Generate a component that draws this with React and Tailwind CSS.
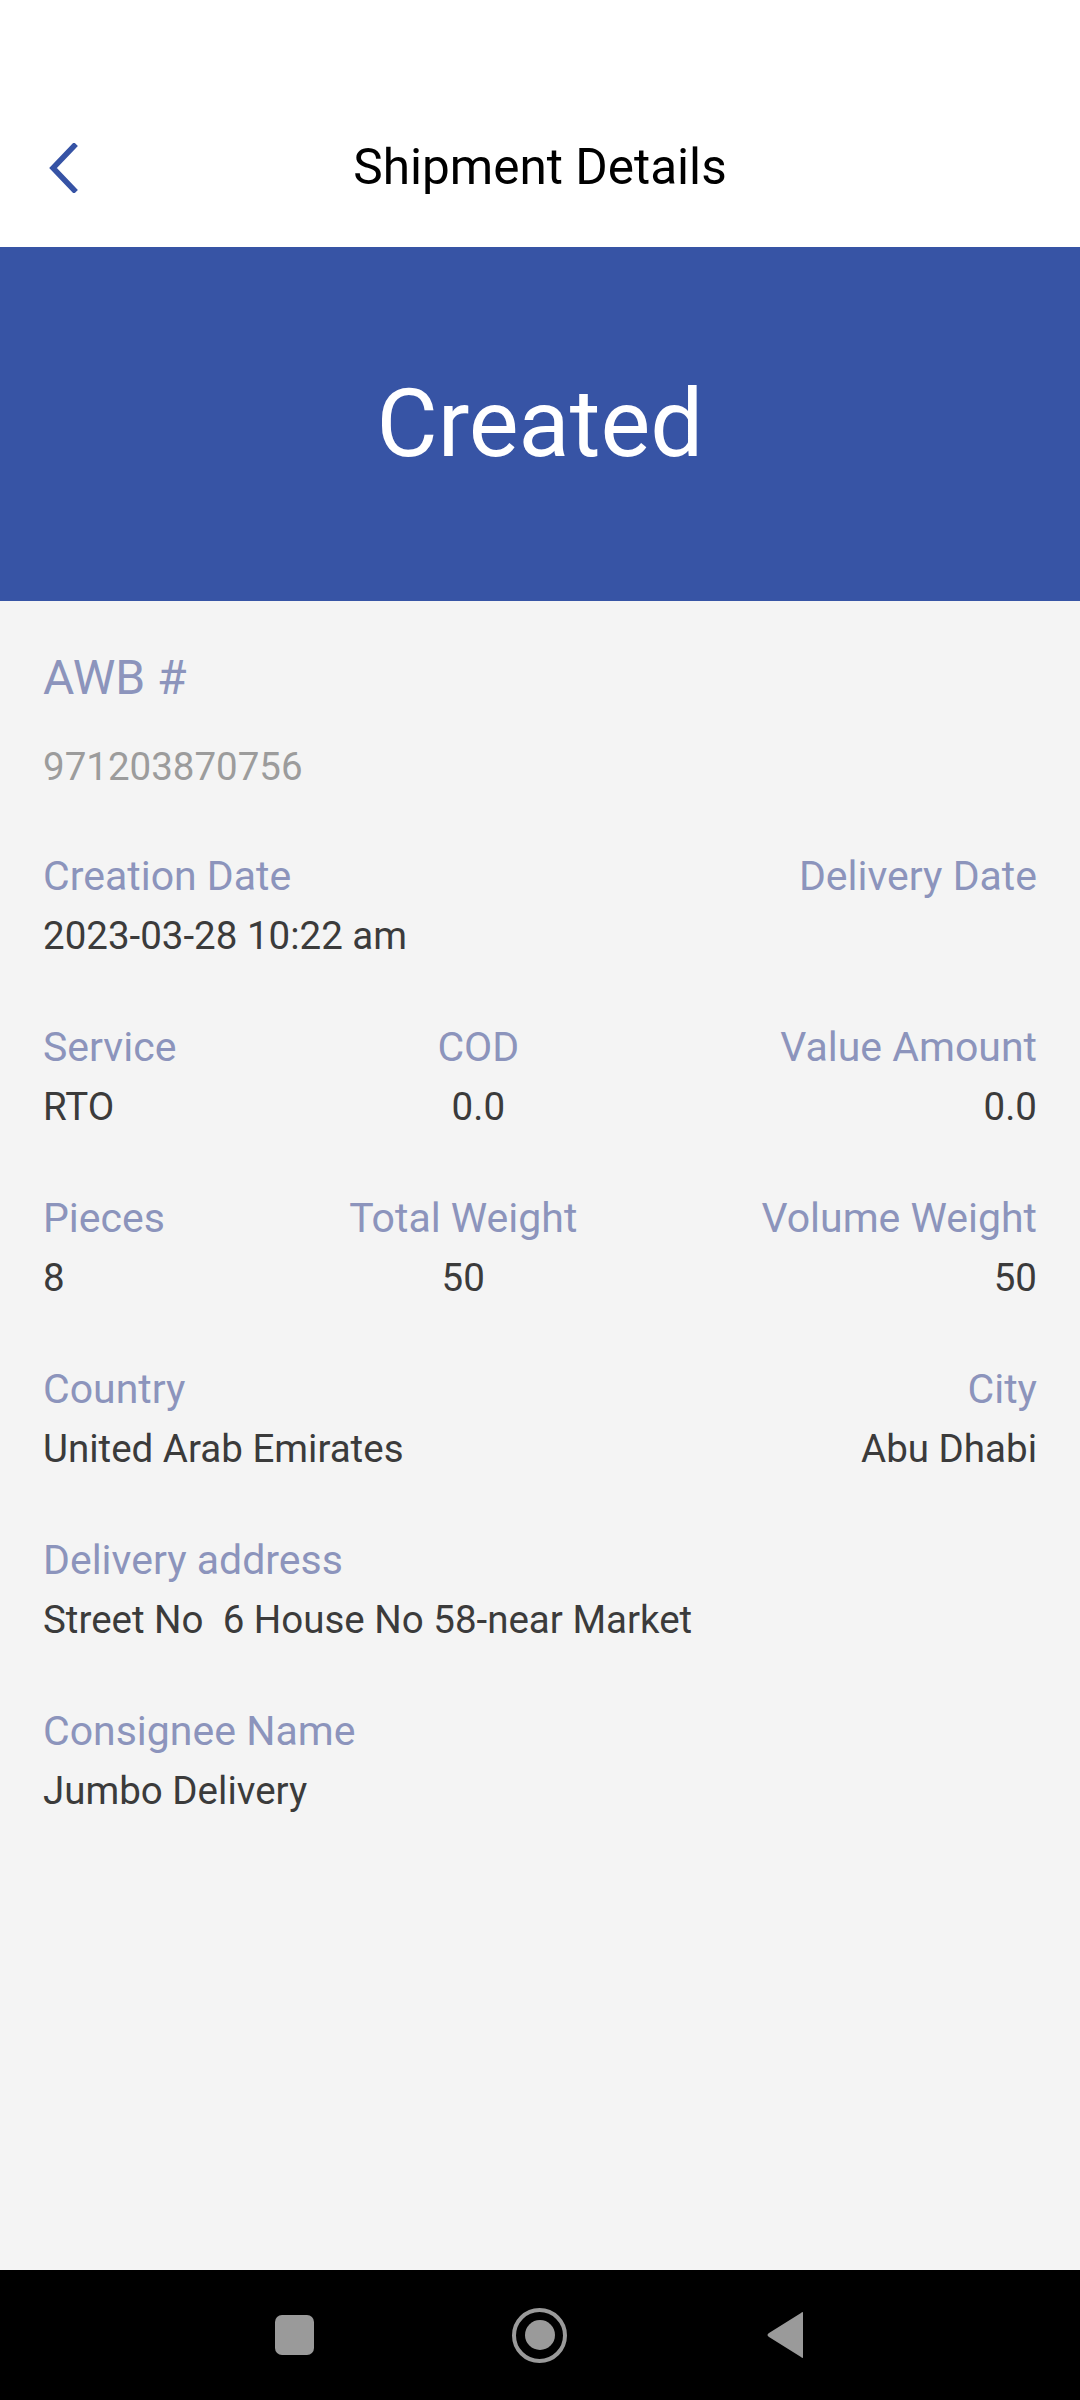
import { useState } from "react";

const label = "text-[41px] leading-[44px] text-[#8c94bc]";
const value = "mt-[16px] text-[38.5px] leading-[44px] text-[#3b3b3b]";

function Field({ title, text, align = "start" }) {
  const alignCls =
    align === "end" ? "items-end text-right" : align === "center" ? "items-center text-center" : "items-start";
  return (
    <div className={`flex flex-col ${alignCls}`}>
      <p className={label}>{title}</p>
      <p className={value}>{text}</p>
    </div>
  );
}

function Row({ children }) {
  return <div className="mb-[67px] flex items-start justify-between">{children}</div>;
}

function NavBar() {
  return (
    <div className="flex h-[130px] items-center justify-center bg-black">
      <div className="flex w-[531px] items-center justify-between">
        <div className="h-[40px] w-[39px] rounded-[7px] bg-[#9a9a9a]" />
        <div className="flex h-[55px] w-[55px] items-center justify-center rounded-full border-[4px] border-[#9a9a9a]">
          <div className="h-[30px] w-[30px] rounded-full bg-[#9a9a9a]" />
        </div>
        <svg width="40" height="48" viewBox="0 0 40 48">
          <path d="M37 2 L37 46 Q37 48 35 46 L3 26 Q0 24 3 22 L35 2 Q37 0 37 2 Z" fill="#9a9a9a" />
        </svg>
      </div>
    </div>
  );
}

export default function App() {
  const [data] = useState({
    awb: "971203870756",
    created: "2023-03-28 10:22 am",
  });

  return (
    <div className="flex h-[2400px] w-[1080px] flex-col bg-[#f4f4f4] font-['Roboto',sans-serif]">
      <header className="h-[247px] bg-white pt-[88px]">
        <div className="relative flex h-[159px] items-center justify-center">
          <button className="absolute left-[47px] top-1/2 -translate-y-1/2" type="button">
            <svg width="32" height="50" viewBox="0 0 32 50">
              <polyline
                points="27,3 6,25 27,47"
                fill="none"
                stroke="#3653a5"
                strokeWidth="5.5"
                strokeLinecap="square"
              />
            </svg>
          </button>
          <h1 className="text-[49.5px] leading-[57px] text-black">Shipment Details</h1>
        </div>
      </header>

      <section className="flex h-[354px] items-center justify-center bg-[#3754a5]">
        <p className="text-[94px] leading-[116px] text-white">Created</p>
      </section>

      <main className="flex-1 px-[43px] pt-[47px]">
        <p className="text-[48px] leading-[60px] text-[#8c94bc]">AWB #</p>
        <p className="mt-[37px] text-[38.5px] leading-[44px] text-[#9c9c9c]">{data.awb}</p>

        <div className="mt-[65px]">
          <Row>
            <Field title="Creation Date" text={data.created} />
            <div className="flex flex-col items-end">
              <p className={label}>Delivery Date</p>
            </div>
          </Row>
          <Row>
            <Field title="Service" text="RTO" />
            <Field title="COD" text="0.0" align="center" />
            <Field title="Value Amount" text="0.0" align="end" />
          </Row>
          <Row>
            <Field title="Pieces" text="8" />
            <Field title="Total Weight" text="50" align="center" />
            <Field title="Volume Weight" text="50" align="end" />
          </Row>
          <Row>
            <Field title="Country" text="United Arab Emirates" />
            <Field title="City" text="Abu Dhabi" align="end" />
          </Row>
          <Row>
            <Field title="Delivery address" text="Street No&nbsp; 6 House No 58-near Market" />
          </Row>
          <Row>
            <Field title="Consignee Name" text="Jumbo Delivery" />
          </Row>
        </div>
      </main>

      <NavBar />
    </div>
  );
}
